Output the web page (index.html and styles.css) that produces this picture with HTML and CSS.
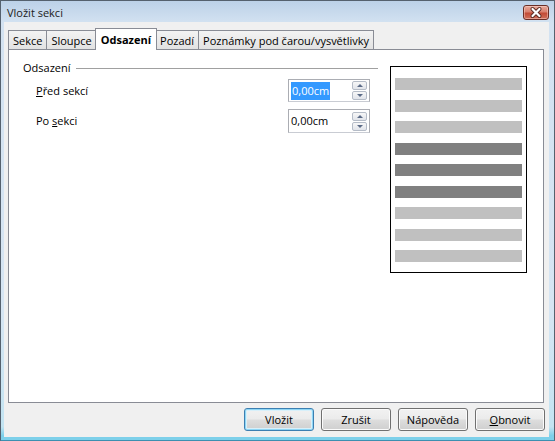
FILE: index.html
```html
<!DOCTYPE html>
<html lang="cs">
<head>
<meta charset="utf-8">
<title>Vložit sekci</title>
<link rel="stylesheet" href="styles.css">
</head>
<body>
<div class="window">
  <div class="titlebar">
    <span class="title">Vložit sekci</span>
    <span class="close">
      <svg width="24" height="13" viewBox="0 0 24 13">
        <path d="M8.5 3 L15.5 10 M15.5 3 L8.5 10" stroke="#5a2a22" stroke-width="4" stroke-linecap="round"/>
        <path d="M8.5 3 L15.5 10 M15.5 3 L8.5 10" stroke="#ffffff" stroke-width="2.2" stroke-linecap="round"/>
      </svg>
    </span>
  </div>
  <div class="client">
    <div class="tabs">
      <div class="tab">Sekce</div>
      <div class="tab">Sloupce</div>
      <div class="tab active">Odsazení</div>
      <div class="tab">Pozadí</div>
      <div class="tab">Poznámky pod čarou/vysvětlivky</div>
    </div>
    <div class="panel">
      <div class="group">
        <div class="group-head"><span>Odsazení</span><span class="rule"></span></div>
        <div class="row">
          <span class="label"><u>P</u>řed sekcí</span>
          <div class="spin">
            <span class="val"><span class="sel">0,00cm</span></span>
            <span class="spin-btns"><span class="sb up"></span><span class="sb down"></span></span>
          </div>
        </div>
        <div class="row second">
          <span class="label">Po <u>s</u>ekci</span>
          <div class="spin">
            <span class="val">0,00cm</span>
            <span class="spin-btns"><span class="sb up"></span><span class="sb down"></span></span>
          </div>
        </div>
      </div>
      <div class="preview">
        <span class="bar light"></span>
        <span class="bar light"></span>
        <span class="bar light"></span>
        <span class="bar dark"></span>
        <span class="bar dark"></span>
        <span class="bar dark"></span>
        <span class="bar light"></span>
        <span class="bar light"></span>
        <span class="bar light"></span>
      </div>
    </div>
    <div class="buttons">
      <span class="btn default">Vložit</span>
      <span class="btn">Zrušit</span>
      <span class="btn">Nápověda</span>
      <span class="btn"><u>O</u>bnovit</span>
    </div>
  </div>
</div>
</body>
</html>
```
FILE: styles.css
```css
* { box-sizing: border-box; }

body {
  margin: 0;
  font-family: "Open Sans", "Noto Sans", sans-serif;
  font-size: 11px;
  color: #000;
}

.window {
  width: 555px;
  height: 441px;
  display: flex;
  flex-direction: column;
  border: 1px solid #55616e;
  border-bottom-color: #3d8fb0;
  background: linear-gradient(#bcd1e8 0px, #d3e2f1 22px, #d6e5f3 70%, #c3e4f2 97%, #7dd0ea 99%);
}

.titlebar {
  height: 21px;
  flex: none;
  display: flex;
  align-items: center;
  justify-content: space-between;
  padding: 0 5px 0 6px;
}

.title {
  color: #1b1b1b;
  line-height: 16px;
  padding-top: 2px;
}

.close {
  width: 26px;
  height: 15px;
  margin-top: 2px;
  border: 1px solid #6b2f27;
  border-radius: 3px;
  background: linear-gradient(#e8aa9c 0%, #d8806e 45%, #c24b36 55%, #d0705c 100%);
  box-shadow: inset 0 0 0 1px rgba(255, 220, 210, 0.45);
  display: flex;
  align-items: center;
  justify-content: center;
}

.client {
  flex: 1;
  margin: 0 5px 3px 3px;
  background: #f0f0f0;
  display: flex;
  flex-direction: column;
  padding: 6px 4px 6px 4px;
}

.tabs {
  display: flex;
  align-items: flex-end;
  height: 21px;
  flex: none;
}

.tab {
  height: 19px;
  padding: 2px 4px 0 4px;
  line-height: 16px;
  border: 1px solid #898c95;
  border-bottom: none;
  background: linear-gradient(#f3f3f3, #e2e2e2);
  white-space: nowrap;
}

.tab + .tab { margin-left: -1px; }

.tab.active {
  height: 22px;
  margin: 0 -1px -1px -2px;
  padding: 3px 5px 0 5px;
  background: #fff;
  font-weight: 700;
  position: relative;
  z-index: 1;
}

.tab.active + .tab { margin-left: -1px; }

.panel {
  flex: 1;
  margin-right: 1px;
  border: 1px solid #898c95;
  background: #fff;
  display: flex;
  align-items: flex-start;
  padding: 10px 16px 0 14px;
}

.group {
  width: 355px;
}

.group-head {
  height: 16px;
  display: flex;
  align-items: center;
  line-height: 16px;
}

.rule {
  flex: 1;
  height: 1px;
  margin-left: 5px;
  background: #a0a0a0;
}

.row {
  height: 23px;
  margin-top: 3px;
  display: flex;
  align-items: center;
  justify-content: space-between;
  padding: 0 8px 0 13px;
}

.row.second { margin-top: 7px; height: 24px; }

.label { line-height: 16px; }

.spin {
  width: 82px;
  height: 100%;
  border: 1px solid #abadb3;
  border-bottom-color: #c9ccd3;
  display: flex;
  align-items: center;
  padding: 0 2px 0 2px;
  background: #fff;
}

.val {
  flex: 1;
  line-height: 18px;
}

.sel {
  background: #3399ff;
  color: #fff;
  display: inline-block;
  padding: 0 1px;
}

.spin-btns {
  width: 15px;
  height: 19px;
  display: flex;
  flex-direction: column;
  gap: 1px;
}

.sb {
  flex: 1;
  border: 1px solid #b5bcc7;
  border-radius: 2px;
  background: linear-gradient(#f7f7f7, #e1e4ea);
  display: flex;
  align-items: center;
  justify-content: center;
}

.sb::after {
  content: "";
  border-left: 3px solid transparent;
  border-right: 3px solid transparent;
}

.up::after { border-bottom: 3px solid #5a6a86; }
.down::after { border-top: 3px solid #5a6a86; }

.preview {
  width: 137px;
  height: 207px;
  margin: 6px 0 0 12px;
  border: 1px solid #000;
  padding: 11px 4px 10px 4px;
  display: flex;
  flex-direction: column;
  justify-content: space-between;
}

.bar { height: 12px; display: block; }
.bar.light { background: #c0c0c0; }
.bar.dark { background: #808080; }

.buttons {
  flex: none;
  display: flex;
  justify-content: flex-end;
  gap: 7px;
  margin-top: 5px;
}

.btn {
  width: 70px;
  height: 23px;
  border: 1px solid #707070;
  border-radius: 3px;
  background: linear-gradient(#f2f2f2 0%, #ebebeb 48%, #dddddd 52%, #cfcfcf 100%);
  box-shadow: inset 0 0 0 1px #fbfbfb;
  display: flex;
  align-items: center;
  justify-content: center;
  line-height: 16px;
}

.btn.default {
  border-color: #3c7fb1;
  box-shadow: inset 0 0 0 1px #8fd6f5, inset 0 0 0 2px #d8f0fa;
}
```
